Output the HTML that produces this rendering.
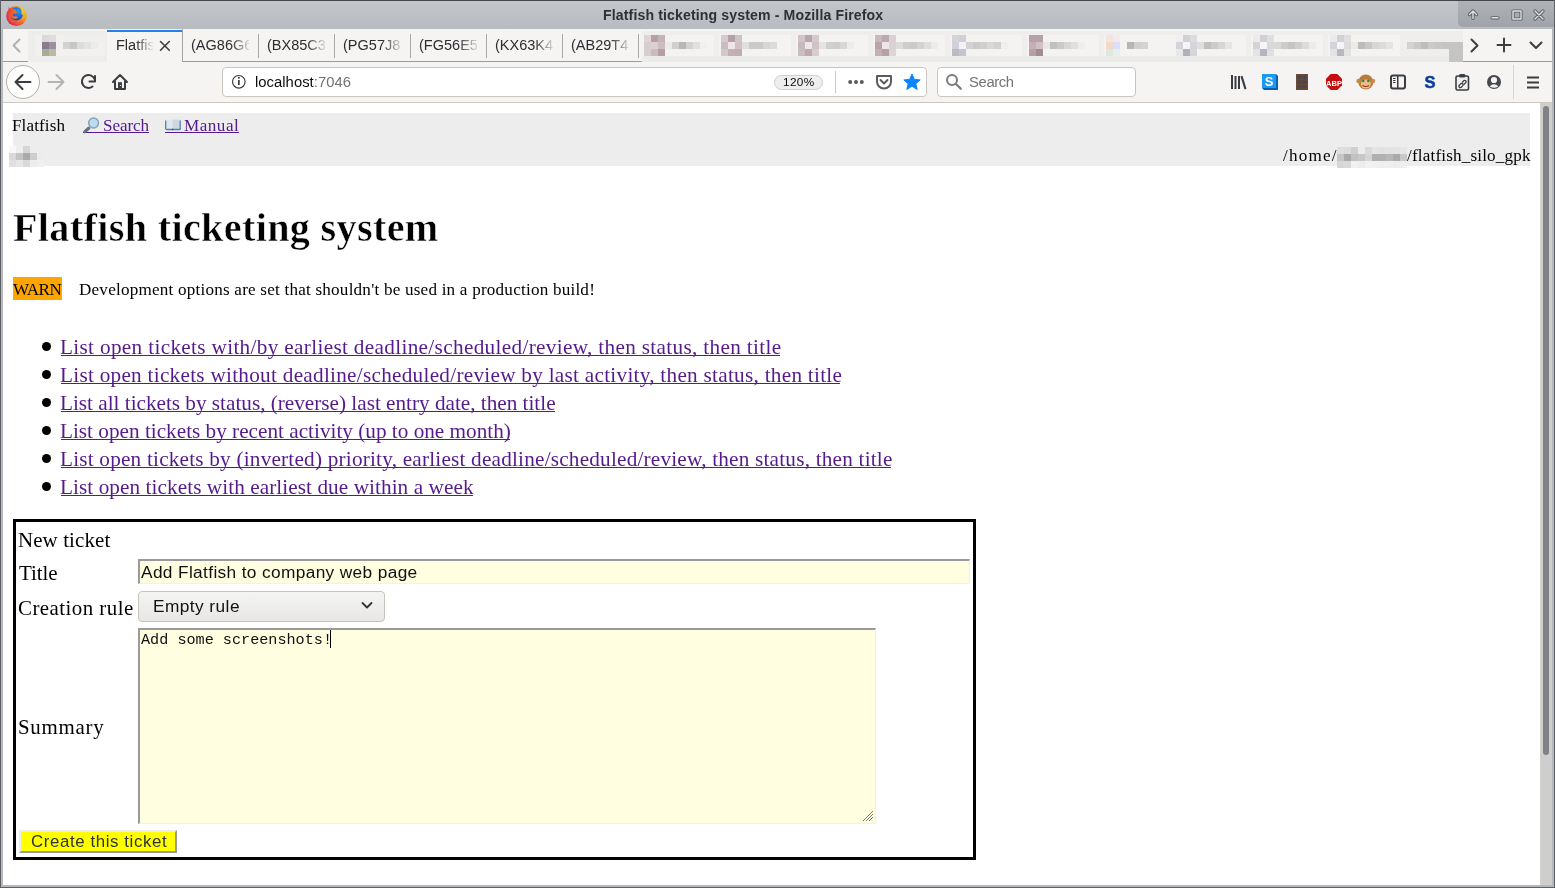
<!DOCTYPE html>
<html><head><meta charset="utf-8"><style>
html,body{margin:0;padding:0;}
body{width:1555px;height:888px;overflow:hidden;position:relative;background:#b9bcc1;font-family:"Liberation Sans",sans-serif;}
.a{position:absolute;}
.t{position:absolute;white-space:nowrap;line-height:1;transform-origin:0 0;will-change:transform;}
.serif{font-family:"Liberation Serif",serif;}
.mono{font-family:"Liberation Mono",monospace;}
.lk{color:#551a8b;}
.ul{position:absolute;height:1px;background:#551a8b;}
svg{position:absolute;overflow:visible;}
</style></head><body>
<div class="a" style="left:0;top:0;width:1555px;height:29px;background:linear-gradient(#c4c6ca,#b8bbc0);"></div>
<div class="a" style="left:0;top:0;width:1555px;height:1px;background:#43464b;"></div>
<div class="a" style="left:0;top:0;width:1px;height:888px;background:#5d6064;"></div>
<div class="a" style="left:1554px;top:0;width:1px;height:888px;background:#5d6064;"></div>
<div class="a" style="left:0;top:887px;width:1555px;height:1px;background:#5d6064;"></div>
<div class="a" style="left:1458px;top:1px;width:96px;height:26px;background:linear-gradient(#b0b3b8,#9fa2a7);border-bottom-left-radius:5px;"></div>
<svg style="left:0;top:0" width="1555" height="30">
<g stroke="#5d6065" stroke-width="3.2" stroke-linecap="round" stroke-linejoin="round" fill="none">
<path d="M1473 18.5V11.5M1469.5 14.5l3.5-3.5 3.5 3.5"/>
<path d="M1492 17.8h6"/>
<rect x="1513" y="11" width="8" height="8"/>
<path d="M1535 11l8 8M1543 11l-8 8"/>
</g>
<g stroke="#dfe1e4" stroke-width="1.4" stroke-linecap="round" stroke-linejoin="round" fill="none">
<path d="M1473 18.5V11.5M1469.5 14.5l3.5-3.5 3.5 3.5"/>
<path d="M1492 17.8h6"/>
<rect x="1513" y="11" width="8" height="8"/>
<path d="M1535 11l8 8M1543 11l-8 8"/>
</g>
</svg>
<svg style="left:3px;top:2px" width="26" height="26" viewBox="0 0 26 26">
<defs>
<radialGradient id="ffo" cx="0.8" cy="0.3" r="0.95"><stop offset="0" stop-color="#f5c82a"/><stop offset="0.3" stop-color="#f7a51f"/><stop offset="0.55" stop-color="#f26a2c"/><stop offset="0.8" stop-color="#e5334a"/><stop offset="1" stop-color="#c8247a"/></radialGradient>
<radialGradient id="ffb" cx="0.65" cy="0.3" r="0.8"><stop offset="0" stop-color="#1ea0f0"/><stop offset="0.55" stop-color="#2166d8"/><stop offset="1" stop-color="#3a2c9c"/></radialGradient>
<linearGradient id="fft" x1="0" y1="0" x2="0.4" y2="1"><stop offset="0" stop-color="#e6de48"/><stop offset="0.6" stop-color="#eec22e"/><stop offset="1" stop-color="#f3a51c"/></linearGradient>
<linearGradient id="ffh" x1="0" y1="0" x2="1" y2="0.3"><stop offset="0" stop-color="#e2393f"/><stop offset="1" stop-color="#f0802a"/></linearGradient>
</defs>
<circle cx="13.3" cy="14" r="10.1" fill="url(#ffo)"/>
<circle cx="13.6" cy="11.8" r="6.6" fill="url(#ffb)"/>
<path d="M15.4 2.2c0.8 1.4 2 2.4 3.4 3.2c3 1.6 5 4.8 5 8.8c0 1.6-0.3 3-0.8 4.2c-0.6-3-2.4-5.2-4.6-6.4c0.6-3.6-0.6-6.6-3-9.8z" fill="url(#fft)"/>
<path d="M5.6 4.4c0.5 1.4 1.4 2.4 2.6 2.8c1.6-0.4 3.4-0.2 4.6 0.6l-0.2 1.4l1.8 1.4l-1.6 1l-2.6 0.2l-0.4 1.6c1 0.8 2.6 1 3.6 1.1l1.4 0.2l-0.4 1.5l-2 0.5l-1.6 0c-1.6-0.2-2.8-1.2-3.4-2.4c-0.2 2.8 1.4 5 3.8 6.2c-2.6 0-4.8-1.6-5.8-4.2c-0.8-2.6-0.6-5.8 0.2-8z" fill="url(#ffh)"/>
</svg>
<div class="t" style="left:603.3px;top:8.3px;font-size:14.1px;letter-spacing:0.126px;color:#2e3134;font-weight:700;">Flatfish ticketing system - Mozilla Firefox</div>
<div class="a" style="left:3px;top:29px;width:1549px;height:33px;background:#f5f4f3;"></div>
<div class="a" style="left:3px;top:61px;width:1549px;height:1px;background:#9a9a9a;"></div>
<div class="a" style="left:107px;top:29px;width:75px;height:33px;background:#f5f4f3;border-right:1px solid #a3a3a3;"></div>
<div class="a" style="left:107px;top:30px;width:75px;height:2px;background:#2380ea;"></div>
<svg style="left:0;top:0" width="1555" height="64"><rect x="28" y="31" width="79" height="32" fill="#ededec"/><rect x="35" y="35" width="70" height="21" fill="#f2f1f0"/><rect x="42" y="35" width="7" height="7" fill="#dcdad9"/><rect x="42" y="42" width="7" height="7" fill="#8a7b90"/><rect x="42" y="49" width="7" height="7" fill="#a9ab94"/><rect x="49" y="35" width="7" height="7" fill="#dfdddc"/><rect x="49" y="42" width="7" height="7" fill="#9d8fa0"/><rect x="49" y="49" width="7" height="7" fill="#b9baa6"/><rect x="63" y="42" width="7" height="7" fill="#d3d3d2"/><rect x="70" y="42" width="7" height="7" fill="#c7c7c6"/><rect x="77" y="42" width="7" height="7" fill="#dcdcdb"/><rect x="84" y="42" width="7" height="7" fill="#e3e3e2"/><rect x="91" y="42" width="7" height="7" fill="#ececeb"/><rect x="63" y="35" width="42" height="7" fill="#f0efee"/><rect x="642" y="31" width="821" height="32" fill="#efeeed"/><rect x="642" y="56" width="821" height="7" fill="#ebebea"/><rect x="642" y="35" width="72" height="21" fill="#f4f3f2"/><rect x="644" y="35" width="7" height="7" fill="#ddd5d7"/><rect x="644" y="42" width="7" height="7" fill="#d8ccd0"/><rect x="644" y="49" width="7" height="7" fill="#d6cfd1"/><rect x="651" y="35" width="7" height="7" fill="#b5a0a6"/><rect x="651" y="42" width="7" height="7" fill="#dccfd3"/><rect x="651" y="49" width="7" height="7" fill="#c9bbc0"/><rect x="658" y="35" width="7" height="7" fill="#c4b4b7"/><rect x="658" y="42" width="7" height="7" fill="#cdbdc2"/><rect x="658" y="49" width="7" height="7" fill="#b49fa4"/><rect x="665" y="42" width="7" height="7" fill="#ebebea"/><rect x="672" y="42" width="7" height="7" fill="#cfcfcf"/><rect x="679" y="42" width="7" height="7" fill="#b8b8b8"/><rect x="686" y="42" width="7" height="7" fill="#d2d2d1"/><rect x="693" y="42" width="7" height="7" fill="#e0e0e0"/><rect x="700" y="42" width="7" height="7" fill="#f0f0ef"/><rect x="719" y="35" width="72" height="21" fill="#f4f3f2"/><rect x="721" y="35" width="7" height="7" fill="#d5c9cd"/><rect x="721" y="42" width="7" height="7" fill="#cbbbc0"/><rect x="721" y="49" width="7" height="7" fill="#d0c8c9"/><rect x="728" y="35" width="7" height="7" fill="#b5a0a7"/><rect x="728" y="42" width="7" height="7" fill="#eee5e8"/><rect x="728" y="49" width="7" height="7" fill="#c3b1b5"/><rect x="735" y="35" width="7" height="7" fill="#cdc2c4"/><rect x="735" y="42" width="7" height="7" fill="#cfc1c5"/><rect x="735" y="49" width="7" height="7" fill="#c1adb3"/><rect x="742" y="42" width="7" height="7" fill="#dfdfdd"/><rect x="749" y="42" width="7" height="7" fill="#cacac8"/><rect x="756" y="42" width="7" height="7" fill="#cacac8"/><rect x="763" y="42" width="7" height="7" fill="#d6d6d5"/><rect x="770" y="42" width="7" height="7" fill="#dcdcdc"/><rect x="796" y="35" width="72" height="21" fill="#f4f3f2"/><rect x="798" y="35" width="7" height="7" fill="#d0c4c8"/><rect x="798" y="42" width="7" height="7" fill="#c8b8bd"/><rect x="798" y="49" width="7" height="7" fill="#cbbec2"/><rect x="805" y="35" width="7" height="7" fill="#b8a4aa"/><rect x="805" y="42" width="7" height="7" fill="#eee6e8"/><rect x="805" y="49" width="7" height="7" fill="#bea9af"/><rect x="812" y="35" width="7" height="7" fill="#d4c9cc"/><rect x="812" y="42" width="7" height="7" fill="#cfc2c6"/><rect x="812" y="49" width="7" height="7" fill="#d6cdd0"/><rect x="819" y="42" width="7" height="7" fill="#e4e4e3"/><rect x="826" y="42" width="7" height="7" fill="#d0d0cf"/><rect x="833" y="42" width="7" height="7" fill="#cdcdcc"/><rect x="840" y="42" width="7" height="7" fill="#d8d8d7"/><rect x="847" y="42" width="7" height="7" fill="#ececeb"/><rect x="873" y="35" width="72" height="21" fill="#f4f3f2"/><rect x="875" y="35" width="7" height="7" fill="#c9b8bd"/><rect x="875" y="42" width="7" height="7" fill="#b9a2a9"/><rect x="875" y="49" width="7" height="7" fill="#c3afb5"/><rect x="882" y="35" width="7" height="7" fill="#bca8ae"/><rect x="882" y="42" width="7" height="7" fill="#ede6e8"/><rect x="882" y="49" width="7" height="7" fill="#b7a1a7"/><rect x="889" y="35" width="7" height="7" fill="#d9d1d3"/><rect x="889" y="42" width="7" height="7" fill="#d8d2d3"/><rect x="889" y="49" width="7" height="7" fill="#dcd6d7"/><rect x="896" y="42" width="7" height="7" fill="#dcdcdb"/><rect x="903" y="42" width="7" height="7" fill="#cdcdcc"/><rect x="910" y="42" width="7" height="7" fill="#cacac9"/><rect x="917" y="42" width="7" height="7" fill="#d3d3d2"/><rect x="924" y="42" width="7" height="7" fill="#dededd"/><rect x="931" y="42" width="7" height="7" fill="#ebebea"/><rect x="950" y="35" width="72" height="21" fill="#f4f3f2"/><rect x="952" y="35" width="7" height="7" fill="#d3d3da"/><rect x="952" y="42" width="7" height="7" fill="#d0d0d6"/><rect x="952" y="49" width="7" height="7" fill="#b9bac3"/><rect x="959" y="35" width="7" height="7" fill="#d0d0d6"/><rect x="959" y="42" width="7" height="7" fill="#f3f3f3"/><rect x="959" y="49" width="7" height="7" fill="#c5c6cd"/><rect x="966" y="42" width="7" height="7" fill="#d2d2d6"/><rect x="973" y="42" width="7" height="7" fill="#cbcbc8"/><rect x="980" y="42" width="7" height="7" fill="#cfcfcc"/><rect x="987" y="42" width="7" height="7" fill="#d8d8d6"/><rect x="994" y="42" width="7" height="7" fill="#d2d2cf"/><rect x="1001" y="42" width="7" height="7" fill="#eeeeed"/><rect x="1027" y="35" width="72" height="21" fill="#f4f3f2"/><rect x="1029" y="35" width="7" height="7" fill="#b5a3a9"/><rect x="1029" y="42" width="7" height="7" fill="#c5aeb7"/><rect x="1029" y="49" width="7" height="7" fill="#b5a0a6"/><rect x="1036" y="35" width="7" height="7" fill="#b5a3a9"/><rect x="1036" y="42" width="7" height="7" fill="#d0bfc6"/><rect x="1036" y="49" width="7" height="7" fill="#a58b92"/><rect x="1043" y="42" width="7" height="7" fill="#e8e6e6"/><rect x="1050" y="42" width="7" height="7" fill="#c0c0be"/><rect x="1057" y="42" width="7" height="7" fill="#cacac8"/><rect x="1064" y="42" width="7" height="7" fill="#d6d6d5"/><rect x="1071" y="42" width="7" height="7" fill="#e0e0df"/><rect x="1078" y="42" width="7" height="7" fill="#eeeeed"/><rect x="1104" y="35" width="72" height="21" fill="#f4f3f2"/><rect x="1106" y="35" width="7" height="7" fill="#f5e3e3"/><rect x="1106" y="42" width="7" height="7" fill="#f0d9c8"/><rect x="1106" y="49" width="7" height="7" fill="#dde9dc"/><rect x="1113" y="35" width="7" height="7" fill="#f5eaea"/><rect x="1113" y="42" width="7" height="7" fill="#d9defa"/><rect x="1113" y="49" width="7" height="7" fill="#e6efe9"/><rect x="1120" y="42" width="7" height="7" fill="#f3f3f2"/><rect x="1127" y="42" width="7" height="7" fill="#b6b6b6"/><rect x="1134" y="42" width="7" height="7" fill="#d0d0cf"/><rect x="1141" y="42" width="7" height="7" fill="#d3d3d2"/><rect x="1174" y="35" width="72" height="21" fill="#f4f3f2"/><rect x="1176" y="35" width="7" height="7" fill="#f0f0f0"/><rect x="1176" y="42" width="7" height="7" fill="#d4d4d8"/><rect x="1176" y="49" width="7" height="7" fill="#e8e8ea"/><rect x="1183" y="35" width="7" height="7" fill="#d0d0d6"/><rect x="1183" y="42" width="7" height="7" fill="#f5f5f5"/><rect x="1183" y="49" width="7" height="7" fill="#b0b0bb"/><rect x="1190" y="35" width="7" height="7" fill="#dcdcdc"/><rect x="1190" y="42" width="7" height="7" fill="#d6d6da"/><rect x="1190" y="49" width="7" height="7" fill="#d6d6da"/><rect x="1197" y="42" width="7" height="7" fill="#dededd"/><rect x="1204" y="42" width="7" height="7" fill="#c0c0bf"/><rect x="1211" y="42" width="7" height="7" fill="#cbcbca"/><rect x="1218" y="42" width="7" height="7" fill="#d6d6d5"/><rect x="1225" y="42" width="7" height="7" fill="#e5e5e4"/><rect x="1251" y="35" width="72" height="21" fill="#f4f3f2"/><rect x="1253" y="35" width="7" height="7" fill="#ecebec"/><rect x="1253" y="42" width="7" height="7" fill="#d3d3d8"/><rect x="1253" y="49" width="7" height="7" fill="#e3e3e6"/><rect x="1260" y="35" width="7" height="7" fill="#d0d0d6"/><rect x="1260" y="42" width="7" height="7" fill="#f5f5f5"/><rect x="1260" y="49" width="7" height="7" fill="#b5b5bf"/><rect x="1267" y="35" width="7" height="7" fill="#dfdfe0"/><rect x="1267" y="42" width="7" height="7" fill="#d9d9dc"/><rect x="1267" y="49" width="7" height="7" fill="#e0e0e2"/><rect x="1274" y="42" width="7" height="7" fill="#d8d8d7"/><rect x="1281" y="42" width="7" height="7" fill="#cbcbca"/><rect x="1288" y="42" width="7" height="7" fill="#c4c4c3"/><rect x="1295" y="42" width="7" height="7" fill="#cfcfce"/><rect x="1302" y="42" width="7" height="7" fill="#dcdcdb"/><rect x="1309" y="42" width="7" height="7" fill="#ebebea"/><rect x="1328" y="35" width="72" height="21" fill="#f4f3f2"/><rect x="1330" y="35" width="7" height="7" fill="#ecebec"/><rect x="1330" y="42" width="7" height="7" fill="#d3d3d8"/><rect x="1330" y="49" width="7" height="7" fill="#e3e3e6"/><rect x="1337" y="35" width="7" height="7" fill="#d0d0d6"/><rect x="1337" y="42" width="7" height="7" fill="#f5f5f5"/><rect x="1337" y="49" width="7" height="7" fill="#b8b8c2"/><rect x="1344" y="35" width="7" height="7" fill="#dfdfe0"/><rect x="1344" y="42" width="7" height="7" fill="#dcdcdf"/><rect x="1344" y="49" width="7" height="7" fill="#e3e3e5"/><rect x="1351" y="42" width="7" height="7" fill="#eaeae9"/><rect x="1358" y="42" width="7" height="7" fill="#bcbcbb"/><rect x="1365" y="42" width="7" height="7" fill="#c8c8c7"/><rect x="1372" y="42" width="7" height="7" fill="#d6d6d5"/><rect x="1379" y="42" width="7" height="7" fill="#dcdcdb"/><rect x="1386" y="42" width="7" height="7" fill="#e4e4e3"/><rect x="1407" y="42" width="7" height="7" fill="#d2d2d1"/><rect x="1414" y="42" width="7" height="7" fill="#c8c8c7"/><rect x="1421" y="42" width="7" height="7" fill="#bdbdbc"/><rect x="1428" y="42" width="7" height="7" fill="#cacac9"/><rect x="1435" y="42" width="7" height="7" fill="#c7c7c6"/><rect x="1442" y="42" width="7" height="7" fill="#c4c4c3"/><rect x="1449" y="42" width="7" height="7" fill="#bebebd"/><rect x="1456" y="42" width="7" height="7" fill="#c9c9c8"/><rect x="1449" y="42" width="14" height="21" fill="#c4c4c3"/></svg>
<svg style="left:0;top:0" width="1555" height="64">
<g stroke="#b1b1b3" stroke-width="2" fill="none" stroke-linecap="round" stroke-linejoin="round"><path d="M19.5 39.5l-6 6 6 6"/></g>
<g stroke="#3c3e42" stroke-width="2" fill="none" stroke-linecap="round" stroke-linejoin="round">
<path d="M160.5 41.5l8.8 8.8M169.3 41.5l-8.8 8.8" stroke-width="1.6"/>
<path d="M1471.5 39.5l6 6-6 6"/>
<path d="M1504 38.5v13M1497.5 45h13"/>
<path d="M1530.5 42.5l5.5 5.5 5.5-5.5"/>
</g>
<g fill="#a9a9a9"><rect x="258" y="34" width="1" height="24"/><rect x="334" y="34" width="1" height="24"/><rect x="410" y="34" width="1" height="24"/><rect x="486" y="34" width="1" height="24"/><rect x="562" y="34" width="1" height="24"/><rect x="638" y="34" width="1" height="24"/></g>
</svg>
<div class="a" style="left:115.6px;top:33px;width:40px;height:24px;overflow:hidden;"><div class="t" style="left:0px;top:4.8px;font-size:14.53px;color:#2b2d30;">Flatfis</div></div>
<div class="a" style="left:191.3px;top:33px;width:58px;height:24px;overflow:hidden;"><div class="t" style="left:0px;top:4.8px;font-size:14.53px;color:#2b2d30;">(AG86G6</div></div>
<div class="a" style="left:267.3px;top:33px;width:58px;height:24px;overflow:hidden;"><div class="t" style="left:0px;top:4.8px;font-size:14.53px;color:#2b2d30;">(BX85C3</div></div>
<div class="a" style="left:343.2px;top:33px;width:58px;height:24px;overflow:hidden;"><div class="t" style="left:0px;top:4.8px;font-size:14.53px;color:#2b2d30;">(PG57J8L</div></div>
<div class="a" style="left:419.1px;top:33px;width:58px;height:24px;overflow:hidden;"><div class="t" style="left:0px;top:4.8px;font-size:14.53px;color:#2b2d30;">(FG56E5</div></div>
<div class="a" style="left:495px;top:33px;width:58px;height:24px;overflow:hidden;"><div class="t" style="left:0px;top:4.8px;font-size:14.53px;color:#2b2d30;">(KX63K4</div></div>
<div class="a" style="left:570.8px;top:33px;width:58px;height:24px;overflow:hidden;"><div class="t" style="left:0px;top:4.8px;font-size:14.53px;color:#2b2d30;">(AB29T4</div></div>
<div class="a" style="left:136px;top:34px;width:20px;height:22px;background:linear-gradient(90deg,rgba(245,244,243,0),#f5f4f3 90%);"></div>
<div class="a" style="left:230px;top:34px;width:26px;height:22px;background:linear-gradient(90deg,rgba(245,244,243,0),#f5f4f3 85%);"></div>
<div class="a" style="left:306px;top:34px;width:26px;height:22px;background:linear-gradient(90deg,rgba(245,244,243,0),#f5f4f3 85%);"></div>
<div class="a" style="left:382px;top:34px;width:26px;height:22px;background:linear-gradient(90deg,rgba(245,244,243,0),#f5f4f3 85%);"></div>
<div class="a" style="left:458px;top:34px;width:26px;height:22px;background:linear-gradient(90deg,rgba(245,244,243,0),#f5f4f3 85%);"></div>
<div class="a" style="left:534px;top:34px;width:26px;height:22px;background:linear-gradient(90deg,rgba(245,244,243,0),#f5f4f3 85%);"></div>
<div class="a" style="left:610px;top:34px;width:26px;height:22px;background:linear-gradient(90deg,rgba(245,244,243,0),#f5f4f3 85%);"></div>
<div class="a" style="left:3px;top:62px;width:1549px;height:40px;background:#f5f4f3;"></div>
<div class="a" style="left:107px;top:61px;width:75px;height:1px;background:#f5f4f3;"></div>
<div class="a" style="left:3px;top:102px;width:1549px;height:1px;background:#cdc8c1;"></div>
<div class="a" style="left:6px;top:65px;width:32px;height:32px;border:1px solid #b3b1ae;border-radius:50%;background:#fdfdfc;"></div>
<svg style="left:0;top:60px" width="1555" height="42">
<g stroke="#3a3c40" stroke-width="2" fill="none" stroke-linecap="round" stroke-linejoin="round">
<path d="M30.5 22H15.5M22.5 15l-7 7 7 7"/>
</g>
<g stroke="#b3b3b3" stroke-width="2" fill="none" stroke-linecap="round" stroke-linejoin="round">
<path d="M48.5 22H63.5M56.5 15l7 7-7 7"/>
</g>
<g stroke="#3a3c40" stroke-width="2" fill="none" stroke-linecap="round" stroke-linejoin="round">
<path d="M92.5 26.5A6.5 6.5 0 1 1 94.5 19"/>
<path d="M95 16v5.5h-5.5"/>
<path d="M113 22l7-7 7 7M115 21.5v7.5h10v-7.5"/>
</g>
<rect x="118" y="22.2" width="4" height="7" fill="#3d4044"/><circle cx="120.5" cy="25.5" r="0.6" fill="#f5f4f3"/>
</svg>
<div class="a" style="left:222px;top:67px;width:703px;height:28px;border:1px solid #cbc5bd;border-radius:4px;background:#fff;"></div>
<svg style="left:0;top:60px" width="1555" height="42">
<circle cx="238.8" cy="21.8" r="6.3" stroke="#3a3c40" stroke-width="1.2" fill="none"/>
<rect x="238" y="20" width="1.7" height="5" fill="#3a3c40"/><rect x="238" y="17" width="1.7" height="1.7" fill="#3a3c40"/>
</svg>
<div class="t" style="left:254.5px;top:74.8px;font-size:14.83px;letter-spacing:0.023px;color:#0c0c0d;">localhost<span style="color:#737373">:7046</span></div>
<div class="a" style="left:774px;top:75px;width:47px;height:13px;border:1px solid #cfcfcf;border-radius:8px;background:#eeeeee;"></div>
<div class="t" style="left:782.7px;top:76px;font-size:11.77px;letter-spacing:0.367px;color:#0c0c0d;">120%</div>
<div class="a" style="left:835px;top:71px;width:1px;height:22px;background:#cfcac4;"></div>
<svg style="left:0;top:60px" width="1555" height="42">
<g fill="#5b5b5f"><circle cx="850.2" cy="22" r="2"/><circle cx="856" cy="22" r="2"/><circle cx="861.8" cy="22" r="2"/></g>
<path d="M877 16h14v5.5a7 7 0 0 1-14 0z" stroke="#5b5b5f" stroke-width="2" fill="none" stroke-linejoin="round"/>
<path d="M880.5 20l3.5 3.5 3.5-3.5" stroke="#5b5b5f" stroke-width="2" fill="none" stroke-linecap="round" stroke-linejoin="round"/>
<path d="M912 14l2.4 5.4 5.8 0.5-4.4 3.8 1.4 5.7-5.2-3.1-5.2 3.1 1.4-5.7-4.4-3.8 5.8-0.5z" fill="#0a84ff" stroke="#0a84ff" stroke-width="1" stroke-linejoin="round"/>
</svg>
<div class="a" style="left:937px;top:67px;width:197px;height:28px;border:1px solid #cbc5bd;border-radius:4px;background:#fff;"></div>
<svg style="left:0;top:60px" width="1555" height="42">
<circle cx="952" cy="20" r="5" stroke="#7a7a7a" stroke-width="2" fill="none"/>
<path d="M955.8 23.8l5 5" stroke="#7a7a7a" stroke-width="2.2" stroke-linecap="round"/>
</svg>
<div class="t" style="left:968.6px;top:74.9px;font-size:14.83px;letter-spacing:-0.38px;color:#737373;">Search</div>
<svg style="left:0;top:60px" width="1555" height="42">
<g fill="#3a3c40"><rect x="1231" y="15" width="2" height="14"/><rect x="1234.5" y="16" width="2" height="13"/><rect x="1238" y="16" width="2" height="13"/><path d="M1240.5 16.5l2-0.8 4 13-2 0.8z"/></g>
<path d="M1262 14h14l2 2v14h-14l-2-2z" fill="#0b5fb0"/>
<rect x="1262" y="14" width="14" height="14" fill="#1a9af5"/>
<text x="1269" y="26" font-family="Liberation Sans" font-weight="bold" font-size="13" fill="#fff" text-anchor="middle">S</text>
<rect x="1296" y="14" width="12" height="16" fill="#6b4a35"/>
<g fill="#4a4550"><rect x="1297.5" y="15.5" width="4" height="3.5"/><rect x="1302.5" y="15.5" width="4" height="3.5"/><rect x="1297.5" y="20.5" width="4" height="3.5"/><rect x="1302.5" y="20.5" width="4" height="3.5"/><rect x="1297.5" y="25" width="4" height="3.5"/><rect x="1302.5" y="25" width="4" height="3.5"/></g>
<path d="M1330.7 14h6.6l4.7 4.7v6.6l-4.7 4.7h-6.6l-4.7-4.7v-6.6z" fill="#c70d0d"/>
<text x="1334" y="25.5" font-family="Liberation Sans" font-weight="bold" font-size="7.5" fill="#fff" text-anchor="middle">ABP</text>
<circle cx="1365.8" cy="22" r="7.5" fill="#b87a3a"/>
<circle cx="1358.5" cy="21" r="2.2" fill="#c98a48"/><circle cx="1373" cy="21" r="2.2" fill="#c98a48"/>
<ellipse cx="1365.8" cy="24" rx="5" ry="4.5" fill="#e9c08a"/>
<circle cx="1363.3" cy="21" r="1.2" fill="#3d7a3a"/><circle cx="1368.3" cy="21" r="1.2" fill="#3d7a3a"/>
<path d="M1362.5 25.5q3.3 2 6.6 0" stroke="#a0262a" stroke-width="1.2" fill="none"/>
<rect x="1391" y="15.5" width="14" height="13" rx="2" stroke="#3a3c40" stroke-width="2" fill="none"/>
<rect x="1397" y="16" width="1.5" height="12" fill="#3a3c40"/>
<g fill="#3a3c40"><rect x="1393" y="18" width="2.5" height="1"/><rect x="1393" y="20" width="2.5" height="1"/><rect x="1393" y="22" width="2.5" height="1"/></g>
<text x="1430" y="28.3" font-family="Liberation Sans" font-weight="bold" font-size="16.5" fill="#0b3c9c" text-anchor="middle" stroke="#0b3c9c" stroke-width="0.5">S</text>
<rect x="1456" y="16" width="12.5" height="14" rx="1.5" stroke="#3a3c40" stroke-width="1.6" fill="#f0f0f0"/>
<rect x="1459" y="14" width="6.5" height="3.5" rx="1.5" fill="#3a3c40"/>
<path d="M1459 25.5l2-2a1.5 1.5 0 0 1 2 2l-2 2a1.5 1.5 0 0 1-2-2zM1462 22.5l2-2a1.5 1.5 0 0 1 2 2l-2 2" stroke="#3a3c40" stroke-width="1.2" fill="none"/>
<circle cx="1494" cy="22" r="7" fill="#464a4f"/>
<circle cx="1494" cy="20" r="3.1" fill="#f5f4f3"/>
<path d="M1489.6 26.3q4.4-4.2 8.8 0q-4.4 3-8.8 0z" fill="#f5f4f3"/>
<rect x="1513" y="65" width="1" height="34" fill="#d8d5d0" transform="translate(0,-60)"/>
<g fill="#3a3c40"><rect x="1527" y="16.5" width="12" height="2"/><rect x="1527" y="21.5" width="12" height="2"/><rect x="1527" y="26.5" width="12" height="2"/></g>
</svg>
<div class="a" style="left:3px;top:103px;width:1537px;height:782px;background:#fff;"></div>
<div class="a" style="left:1540px;top:103px;width:12px;height:782px;background:#cecece;"></div>
<div class="a" style="left:1540px;top:103px;width:1px;height:782px;background:#d6d1ca;"></div><div class="a" style="left:1543px;top:106px;width:6px;height:649px;background:#7e8285;border-radius:3px;"></div>
<div class="a" style="left:1px;top:29px;width:2px;height:858px;background:#b6b8bc;"></div>
<div class="a" style="left:1552px;top:29px;width:2px;height:858px;background:#b6b8bc;"></div>
<div class="a" style="left:1px;top:885px;width:1553px;height:2px;background:#b6b8bc;"></div>
<div class="a" style="left:13px;top:113px;width:1517px;height:53px;background:#ededed;"></div>
<div class="t serif" style="left:12.1px;top:117px;font-size:17.1px;letter-spacing:0.114px;color:#000;">Flatfish</div>
<div class="ul" style="left:83px;top:132px;width:66px;"></div>
<div class="t serif" style="left:103px;top:116.8px;font-size:17.1px;letter-spacing:-0.08px;color:#551a8b;">Search</div>
<svg style="left:83px;top:116px" width="18" height="18" viewBox="0 0 18 18">
<path d="M1.9 15.6l3.8-3.4" stroke="#607580" stroke-width="3.2" stroke-linecap="round"/>
<circle cx="10.6" cy="7" r="4.9" fill="#bcdcf4" stroke="#8aa2b2" stroke-width="1.5"/>
</svg>
<div class="ul" style="left:165px;top:132px;width:74px;"></div>
<div class="t serif" style="left:184.3px;top:116.8px;font-size:17.1px;letter-spacing:0.5px;color:#551a8b;">Manual</div>
<svg style="left:165px;top:119px" width="16" height="12" viewBox="0 0 16 12">
<rect x="1.2" y="0.6" width="6.5" height="9.2" fill="#e1e7ee"/>
<rect x="7.7" y="0.6" width="6.9" height="9.2" fill="#cdd8e0"/>
<rect x="14.4" y="1.4" width="1.6" height="8.6" fill="#6b97ba"/>
<path d="M0.7 1.4v7.8q0 1.3 1.3 1.3h12.2q1.3 0 1.3-1.3" stroke="#4a82b3" stroke-width="1.3" fill="none"/>
<circle cx="7.6" cy="10.4" r="0.7" fill="#333"/>
</svg>
<svg style="left:0;top:0" width="1555" height="170"><rect x="9" y="146" width="7" height="7" fill="#f8f8f8"/><rect x="16" y="146" width="7" height="7" fill="#eeeeee"/><rect x="23" y="146" width="7" height="7" fill="#d6d6d6"/><rect x="9" y="153" width="7" height="7" fill="#d9d9d9"/><rect x="16" y="153" width="7" height="7" fill="#c4c4c4"/><rect x="23" y="153" width="7" height="7" fill="#aaaaaa"/><rect x="30" y="153" width="7" height="7" fill="#cdcdcd"/><rect x="37" y="153" width="7" height="7" fill="#ececec"/><rect x="9" y="160" width="7" height="7" fill="#e0e0e0"/><rect x="16" y="160" width="7" height="7" fill="#e6e6e6"/><rect x="23" y="160" width="7" height="7" fill="#d9d9d9"/><rect x="30" y="160" width="7" height="7" fill="#ededed"/><rect x="37" y="160" width="7" height="7" fill="#f0f0f0"/><rect x="1337" y="147" width="7" height="7" fill="#dedede"/><rect x="1344" y="147" width="7" height="7" fill="#dcdcdc"/><rect x="1351" y="147" width="7" height="7" fill="#cfcfcf"/><rect x="1358" y="147" width="7" height="7" fill="#ececec"/><rect x="1365" y="147" width="7" height="7" fill="#dadada"/><rect x="1372" y="147" width="7" height="7" fill="#e4e4e4"/><rect x="1379" y="147" width="7" height="7" fill="#e2e2e2"/><rect x="1386" y="147" width="7" height="7" fill="#e2e2e2"/><rect x="1393" y="147" width="7" height="7" fill="#e4e4e4"/><rect x="1400" y="147" width="7" height="7" fill="#e6e6e6"/><rect x="1337" y="154" width="7" height="7" fill="#c5c5c5"/><rect x="1344" y="154" width="7" height="7" fill="#a9a9a9"/><rect x="1351" y="154" width="7" height="7" fill="#c1c1c1"/><rect x="1358" y="154" width="7" height="7" fill="#c8c8c8"/><rect x="1365" y="154" width="7" height="7" fill="#d5d5d5"/><rect x="1372" y="154" width="7" height="7" fill="#b0b0b0"/><rect x="1379" y="154" width="7" height="7" fill="#b1b1b1"/><rect x="1386" y="154" width="7" height="7" fill="#b7b7b7"/><rect x="1393" y="154" width="7" height="7" fill="#aaaaaa"/><rect x="1400" y="154" width="7" height="7" fill="#c8c8c8"/><rect x="1337" y="161" width="7" height="7" fill="#d6d6d6"/><rect x="1344" y="161" width="7" height="7" fill="#d9d9d9"/><rect x="1351" y="161" width="7" height="7" fill="#f0f0f0"/><rect x="1358" y="161" width="7" height="7" fill="#ececec"/><rect x="1365" y="161" width="7" height="7" fill="#f1f1f1"/><rect x="1372" y="161" width="7" height="7" fill="#f0f0f0"/><rect x="1379" y="161" width="7" height="7" fill="#efefef"/><rect x="1386" y="161" width="7" height="7" fill="#efefef"/><rect x="1393" y="161" width="7" height="7" fill="#ededed"/><rect x="1400" y="161" width="7" height="7" fill="#efefef"/></svg>
<div class="t serif" style="left:1283.1px;top:147px;font-size:17.1px;letter-spacing:1.22px;color:#000;">/home/</div>
<div class="t serif" style="left:1406.8px;top:147px;font-size:17.1px;letter-spacing:0.171px;color:#000;">/flatfish_silo_gpk</div>
<div class="t serif" style="left:13px;top:208px;font-size:40.15px;letter-spacing:0.346px;color:#000;font-weight:700;-webkit-text-stroke:0.5px #fff;">Flatfish ticketing system</div>
<div class="a" style="left:13px;top:277px;width:49px;height:23px;background:#ffa500;"></div>
<div class="t serif" style="left:13.1px;top:281px;font-size:17.1px;letter-spacing:-0.533px;color:#000;">WARN</div>
<div class="t serif" style="left:79.3px;top:281px;font-size:17.1px;letter-spacing:0.218px;color:#000;">Development options are set that shouldn&#39;t be used in a production build!</div>
<div class="a" style="left:42px;top:342px;width:9px;height:9px;border-radius:50%;background:#000;"></div>
<div class="t serif" style="left:60px;top:336.9px;font-size:21.22px;letter-spacing:0.331px;color:#551a8b;">List open tickets with/by earliest deadline/scheduled/review, then status, then title</div>
<div class="ul" style="left:61px;top:355px;width:719.3px;"></div>
<div class="a" style="left:42px;top:370px;width:9px;height:9px;border-radius:50%;background:#000;"></div>
<div class="t serif" style="left:60px;top:364.9px;font-size:21.22px;letter-spacing:0.271px;color:#551a8b;">List open tickets without deadline/scheduled/review by last activity, then status, then title</div>
<div class="ul" style="left:61px;top:383px;width:779.4px;"></div>
<div class="a" style="left:42px;top:398px;width:9px;height:9px;border-radius:50%;background:#000;"></div>
<div class="t serif" style="left:60px;top:392.9px;font-size:21.22px;letter-spacing:-0.009px;color:#551a8b;">List all tickets by status, (reverse) last entry date, then title</div>
<div class="ul" style="left:61px;top:411px;width:493.9px;"></div>
<div class="a" style="left:42px;top:426px;width:9px;height:9px;border-radius:50%;background:#000;"></div>
<div class="t serif" style="left:60px;top:420.9px;font-size:21.22px;letter-spacing:0.002px;color:#551a8b;">List open tickets by recent activity (up to one month)</div>
<div class="ul" style="left:61px;top:439px;width:448.6px;"></div>
<div class="a" style="left:42px;top:454px;width:9px;height:9px;border-radius:50%;background:#000;"></div>
<div class="t serif" style="left:60px;top:448.9px;font-size:21.22px;letter-spacing:0.208px;color:#551a8b;">List open tickets by (inverted) priority, earliest deadline/scheduled/review, then status, then title</div>
<div class="ul" style="left:61px;top:467px;width:830.3px;"></div>
<div class="a" style="left:42px;top:482px;width:9px;height:9px;border-radius:50%;background:#000;"></div>
<div class="t serif" style="left:60px;top:476.9px;font-size:21.22px;letter-spacing:0.071px;color:#551a8b;">List open tickets with earliest due within a week</div>
<div class="ul" style="left:61px;top:495px;width:411.9px;"></div>
<div class="a" style="left:13px;top:519px;width:957px;height:335px;border:3px solid #000;"></div>
<div class="t serif" style="left:18px;top:529.8px;font-size:20.92px;letter-spacing:0.122px;color:#000;">New ticket</div>
<div class="t serif" style="left:19px;top:562.9px;font-size:20.92px;letter-spacing:-0.05px;color:#000;">Title</div>
<div class="t serif" style="left:18.2px;top:597.7px;font-size:20.92px;letter-spacing:0.458px;color:#000;">Creation rule</div>
<div class="t serif" style="left:17.8px;top:717px;font-size:20.92px;letter-spacing:0.733px;color:#000;">Summary</div>
<div class="a" style="left:138px;top:559px;width:829px;height:22px;background:#fffee0;border-top:2px solid #9a9a9a;border-left:2px solid #9a9a9a;border-right:1px solid #f0f0f0;border-bottom:1px solid #f0f0f0;box-sizing:content-box;"></div>
<div class="t" style="left:140.9px;top:564px;font-size:17.3px;letter-spacing:0.358px;color:#111;">Add Flatfish to company web page</div>
<div class="a" style="left:138px;top:591px;width:245px;height:29px;border:1px solid #c8c4bd;border-radius:4px;background:linear-gradient(#f4f4f3,#e8e7e6);"></div>
<div class="t" style="left:153.1px;top:598px;font-size:17.3px;letter-spacing:0.433px;color:#111;">Empty rule</div>
<svg style="left:0;top:0" width="1555" height="888"><path d="M362.5 603l4.5 4.5 4.5-4.5" stroke="#333" stroke-width="1.8" fill="none" stroke-linecap="round" stroke-linejoin="round"/></svg>
<div class="a" style="left:138px;top:628px;width:735px;height:193px;background:#fffee0;border-top:2px solid #9a9a9a;border-left:2px solid #9a9a9a;border-right:1px solid #f0f0f0;border-bottom:1px solid #f0f0f0;"></div>
<div class="t mono" style="left:140.9px;top:633px;font-size:15.17px;letter-spacing:-0.0px;color:#111;">Add some screenshots!</div>
<div class="a" style="left:330px;top:630px;width:1px;height:18px;background:#000;"></div>
<svg style="left:0;top:0" width="1555" height="888"><g stroke="#777" stroke-width="1"><path d="M863 821l10-10M866 821l7-7M869 821l4-4"/></g></svg>
<div class="a" style="left:19px;top:830px;width:154px;height:19px;background:#ffff00;border-top:2px solid #ececec;border-left:2px solid #ececec;border-right:2px solid #999;border-bottom:2px solid #999;"></div>
<div class="t" style="left:30.9px;top:833.9px;font-size:16.86px;letter-spacing:0.594px;color:#2e3436;">Create this ticket</div>
</body></html>
